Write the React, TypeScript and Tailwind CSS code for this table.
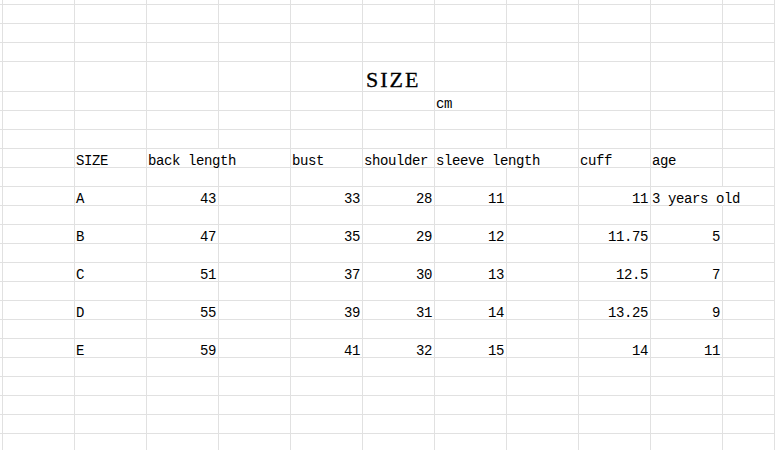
const ROWS = 24
const COLS = 12

type Cell = { text: string; align?: "left" | "right"; spill?: boolean; title?: boolean }

// row -> col -> cell content
const cells: Record<number, Record<number, Cell>> = {
  4: { 6: { text: "SIZE", title: true } },
  5: { 7: { text: "cm" } },
  8: {
    2: { text: "SIZE" },
    3: { text: "back length", spill: true },
    5: { text: "bust" },
    6: { text: "shoulder" },
    7: { text: "sleeve length", spill: true },
    9: { text: "cuff" },
    10: { text: "age" },
  },
}

const sizes = [
  ["A", "43", "33", "28", "11", "11", "3 years old"],
  ["B", "47", "35", "29", "12", "11.75", "5"],
  ["C", "51", "37", "30", "13", "12.5", "7"],
  ["D", "55", "39", "31", "14", "13.25", "9"],
  ["E", "59", "41", "32", "15", "14", "11"],
]

// data rows sit on every other row, starting at row 10
const dataCols = [2, 3, 5, 6, 7, 9, 10]
sizes.forEach((s, i) => {
  const row: Record<number, Cell> = {}
  s.forEach((v, j) => {
    const col = dataCols[j]
    if (j === 0) row[col] = { text: v }
    else if (j === 6 && v.includes(" ")) row[col] = { text: v, spill: true }
    else row[col] = { text: v, align: "right" }
  })
  cells[10 + i * 2] = row
})

function SheetCell({ cell }: { cell?: Cell }) {
  if (!cell) {
    return <div className="border-r border-b border-[#e1e1e1]" />
  }
  if (cell.title) {
    return (
      <div className="flex items-end border-r border-b border-[#e1e1e1] pl-[3px]">
        <span className="whitespace-nowrap font-['Liberation_Serif',serif] text-[22px] leading-[22px] tracking-[2px] text-black [-webkit-text-stroke:0.3px_black]">
          {cell.text}
        </span>
      </div>
    )
  }
  return (
    <div
      className={
        "flex items-end border-b border-[#e1e1e1] " +
        (cell.spill ? "border-r border-r-transparent z-10 " : "border-r ") +
        (cell.align === "right" ? "justify-end pr-[2px]" : "pl-[1px]")
      }
    >
      <span className="whitespace-nowrap font-['Liberation_Mono',monospace] text-[14px] leading-[11px] tracking-[-0.4px] text-black">
        {cell.text}
      </span>
    </div>
  )
}

export default function App() {
  return (
    <div className="w-[775px] h-[450px] overflow-hidden bg-white">
      <div className="grid grid-cols-[3px_repeat(10,72px)_1fr] grid-rows-[5px_19px_19px_19px_30px_repeat(19,19px)]">
        {Array.from({ length: ROWS }).map((_, r) =>
          Array.from({ length: COLS }).map((_, c) => (
            <SheetCell key={`${r}-${c}`} cell={cells[r]?.[c]} />
          ))
        )}
      </div>
    </div>
  )
}
